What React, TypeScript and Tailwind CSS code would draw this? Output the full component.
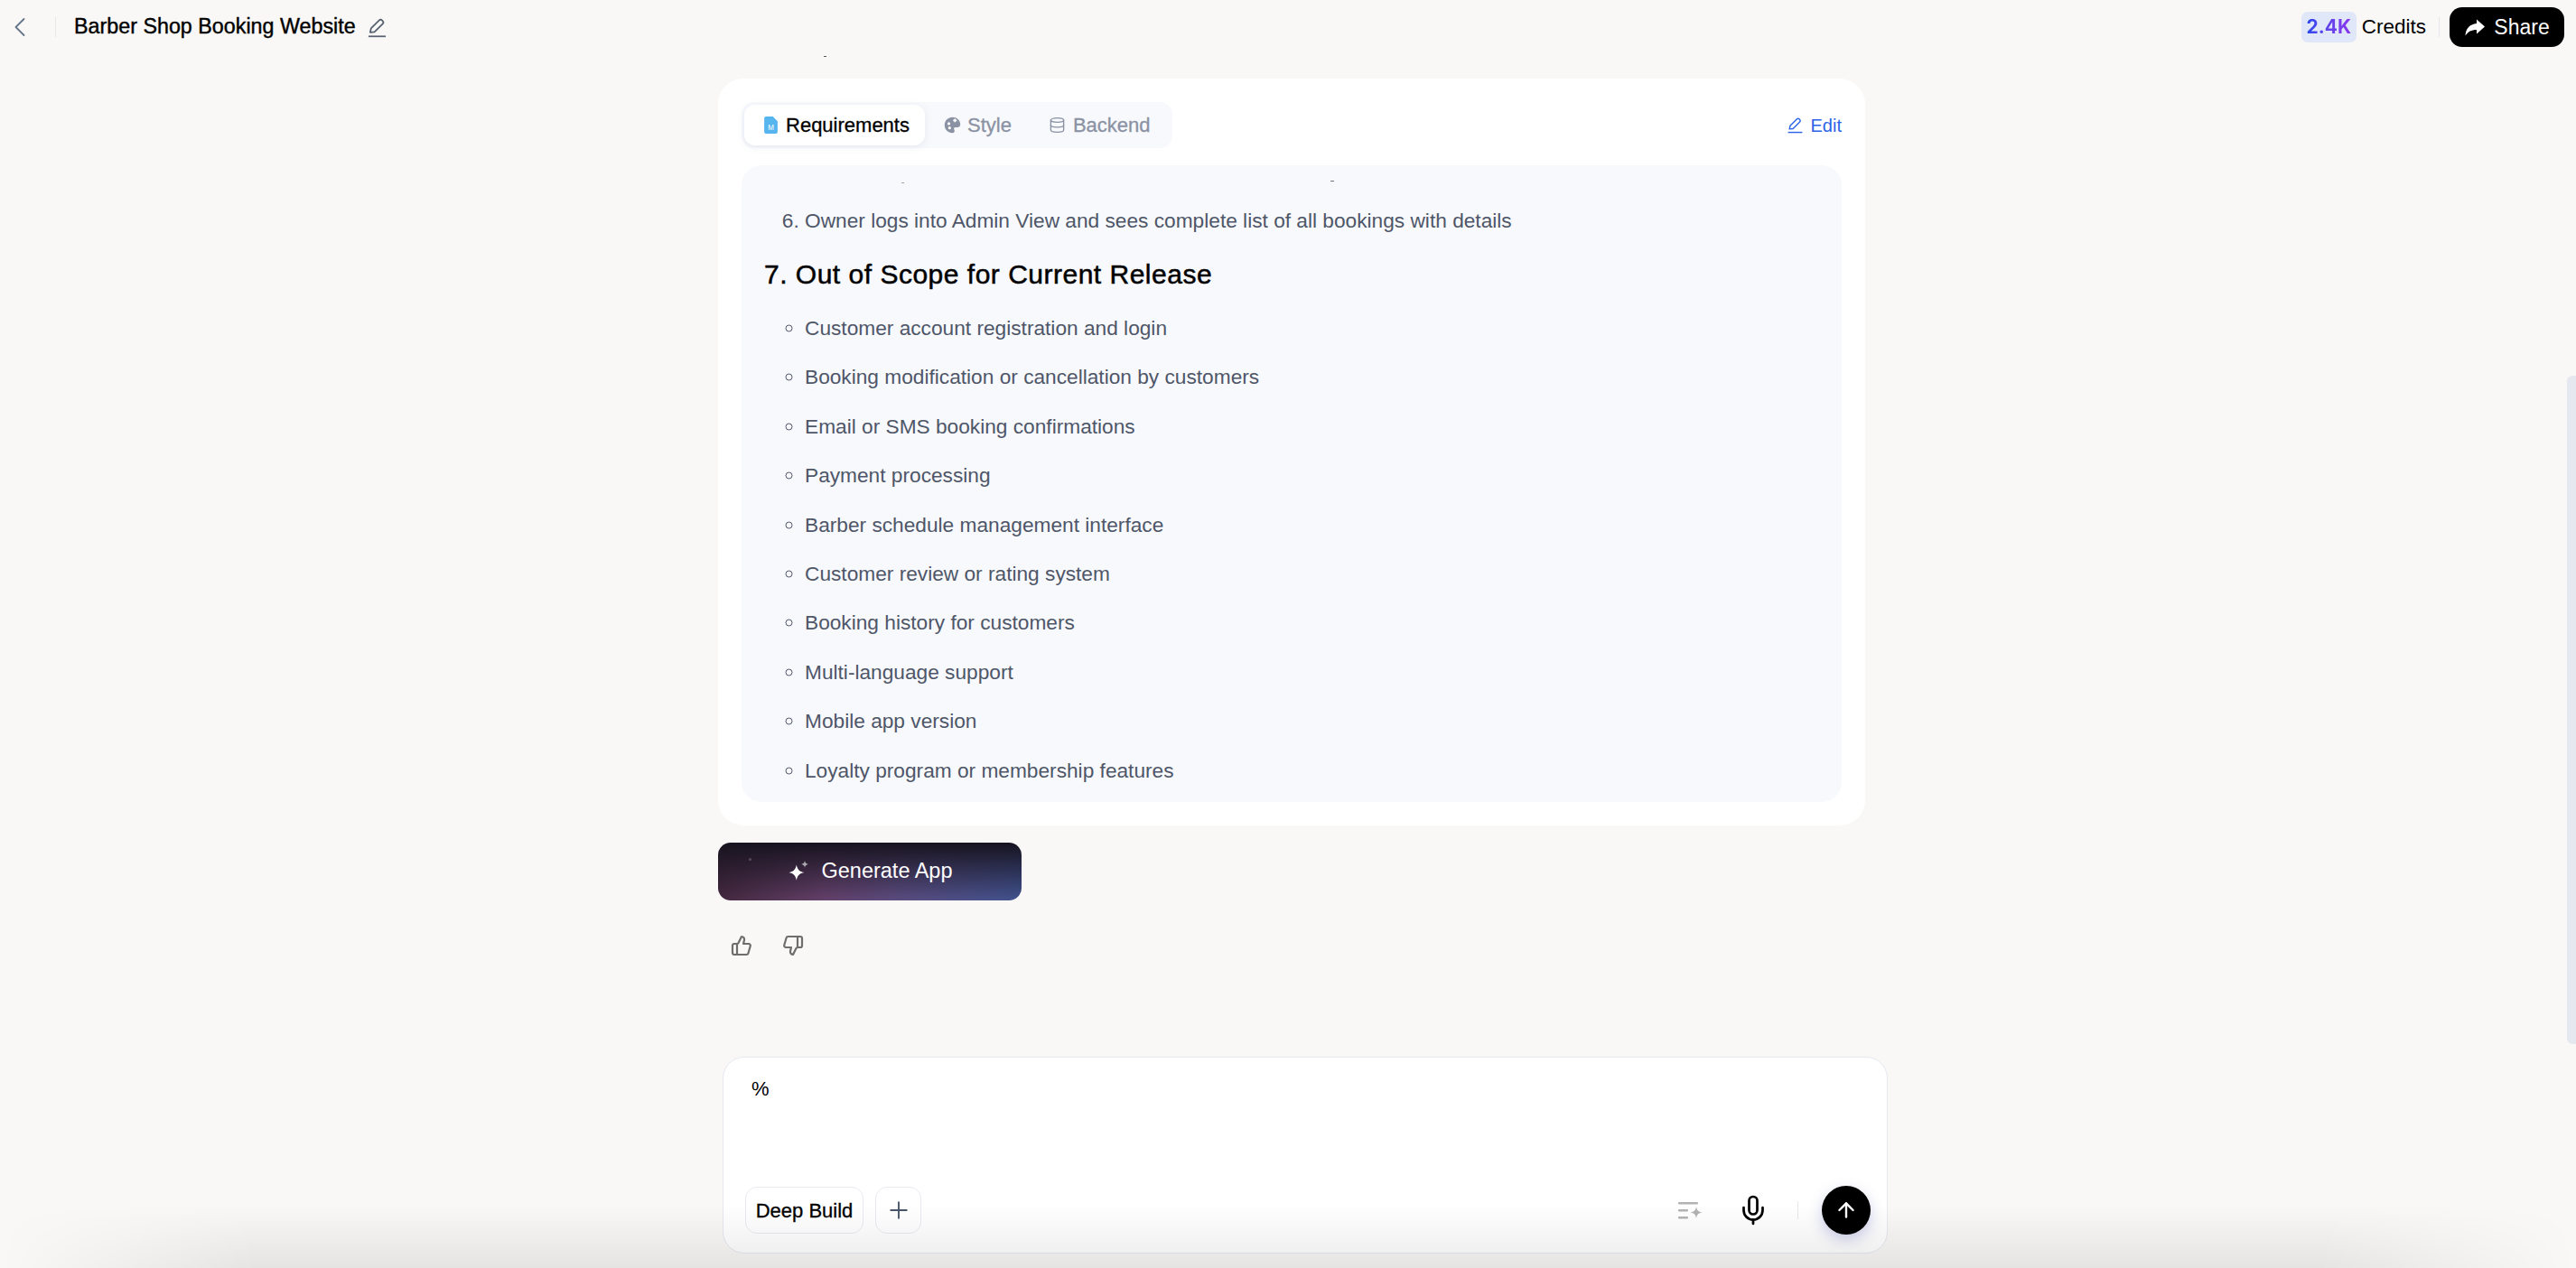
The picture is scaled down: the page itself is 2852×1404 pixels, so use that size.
import { ChevronLeft, ThumbsUp, ThumbsDown, Mic, ArrowUp, Plus, Database } from "lucide-react";

const items = [
  "Customer account registration and login",
  "Booking modification or cancellation by customers",
  "Email or SMS booking confirmations",
  "Payment processing",
  "Barber schedule management interface",
  "Customer review or rating system",
  "Booking history for customers",
  "Multi-language support",
  "Mobile app version",
  "Loyalty program or membership features",
];

function Pen({ className }: { className: string }) {
  return (
    <svg viewBox="0 0 24 24" fill="none" stroke="currentColor" strokeWidth="1.8" strokeLinecap="round" strokeLinejoin="round" className={className}>
      <path d="M4 17.500 5 13 14.500 3.600a2.200 2.200 0 0 1 3.100 0l.9.9a2.200 2.200 0 0 1 0 3.100L9 17z" />
      <path d="M2 22.200h20" strokeLinecap="butt" />
    </svg>
  );
}

export default function App() {
  return (
    <div className="relative h-[1404px] w-[2852px] overflow-hidden bg-[#f9f8f6] font-['Liberation_Sans',sans-serif] text-black">
      <header className="flex h-[60px] items-center justify-between pr-[13px]">
        <div className="flex items-center">
          <ChevronLeft className="ml-[4px] h-[36px] w-[36px] text-[#64748b]" strokeWidth={1.2} />
          <div className="ml-[21px] h-[22px] w-px bg-[#e5e7eb]" />
          <h1 className="ml-[20px] text-[23.3px] font-medium leading-none [-webkit-text-stroke:0.4px_black]">Barber Shop Booking Website</h1>
          <Pen className="ml-[12px] h-[23px] w-[23px] text-[#56606f]" />
        </div>
        <div className="flex items-center">
          <span className="flex h-[34px] w-[61px] items-center justify-center rounded-[7px] bg-[#e0e7f8] font-['Inter',sans-serif] text-[21px] font-bold">
            <span className="bg-gradient-to-r from-[#2548ee] to-[#8b35ec] bg-clip-text text-transparent">2.4K</span>
          </span>
          <span className="ml-[6px] text-[22.5px]">Credits</span>
          <div className="ml-[14px] h-[22px] w-px bg-[#e5e7eb]" />
          <button className="ml-[11px] flex h-[44px] w-[127px] items-center justify-center gap-[9px] rounded-[14px] bg-black text-[23px] font-medium text-white">
            <svg viewBox="0 0 24 24" fill="white" className="h-[24px] w-[24px]">
              <path d="M14 3.500 23 11.500 14 19.500v-4.600c-6 0-9.500 2-12.500 6.600.4-7.500 4.600-12.600 12.500-13.400z" />
            </svg>
            Share
          </button>
        </div>
      </header>

      <main className="ml-[795px] w-[1270px] pt-[27px]">
        <section className="rounded-[28px] bg-white px-[26px] pb-[26px] pt-[26px]">
          <div className="mb-[19px] flex items-center justify-between">
            <div className="flex h-[51px] items-center rounded-[14px] bg-[#f8f9fd] p-[3px] text-[22px] text-[#8a92a3] [-webkit-text-stroke:0.3px_#8a92a3]">
              <div className="flex h-[45px] w-[200px] items-center justify-center gap-[9px] rounded-[12px] bg-white pl-[5px] text-black shadow-[0_2px_8px_rgba(100,116,139,0.12)] [-webkit-text-stroke:0.3px_black]">
                <svg viewBox="0 0 14 18" className="h-[19px] w-[15px]">
                  <path d="M2 0h7l5 5v11a2 2 0 0 1-2 2H2a2 2 0 0 1-2-2V2a2 2 0 0 1 2-2z" fill="#56b4ee" />
                  <text x="7" y="14" fontSize="7" textAnchor="middle" fill="white" fontFamily="Inter">M</text>
                </svg>
                Requirements
              </div>
              <div className="ml-[21px] flex items-center gap-[7px]">
                <svg viewBox="0 0 24 24" className="h-[19px] w-[19px]" fill="#8a92a3" stroke="none">
                  <path d="M12 1C5.900 1 1 5.900 1 12s4.900 11 11 11c2 0 3-1.300 3-2.800 0-1.600-1-2-1-3.200 0-1.200 1-2 2.300-2H19c2.400 0 4-1.800 4-4C23 5.200 18 1 12 1z" />
                  <circle cx="7" cy="10" r="2" fill="#fff" />
                  <circle cx="8" cy="16" r="2" fill="#fff" />
                  <path d="M13 5.500h5M15.500 3v5" stroke="#fff" strokeWidth="2" />
                </svg>
                Style
              </div>
              <div className="ml-[41px] flex items-center gap-[8px] pr-[21px]">
                <Database className="h-[19px] w-[19px]" strokeWidth={1.7} />
                Backend
              </div>
            </div>
            <div className="flex items-center gap-[8px] text-[20px] text-[#2b63e8]">
              <Pen className="h-[19px] w-[19px]" />
              Edit
            </div>
          </div>

          <div className="relative rounded-[22px] bg-[#f8f9fd] px-[25px] pb-[17px] pt-[43px] text-[22.7px] leading-[36px] text-[#4e5668]">
            <span className="absolute left-[177px] top-[19px] h-px w-[3px] bg-[#9ca3af]" />
            <span className="absolute left-[652px] top-[17px] h-px w-[4px] bg-[#6b7280]" />
            <ol start={6} className="list-decimal pl-[45px]">
              <li>Owner logs into Admin View and sees complete list of all bookings with details</li>
            </ol>
            <h2 className="mb-[21px] mt-[22px] text-[30px] font-medium leading-[40px] tracking-[0.5px] text-black [-webkit-text-stroke:0.5px_black]">7. Out of Scope for Current Release</h2>
            <ul className="flex list-[circle] flex-col gap-[18.4px] pl-[45px]">
              {items.map((t) => (
                <li key={t}>{t}</li>
              ))}
            </ul>
          </div>
        </section>

        <button className="relative mt-[19px] flex h-[64px] w-[336px] items-center justify-center gap-[12px] overflow-hidden rounded-[14px] bg-[linear-gradient(to_top,rgba(20,18,30,0)_0%,#17131f_100%),linear-gradient(90deg,#44283f_0%,#64406a_35%,#5a4c80_60%,#40528f_100%)] text-[23.5px] font-medium text-white">
          <span className="absolute left-[34px] top-[17px] h-[3px] w-[3px] rounded-full bg-[#5a4a58]" />
          <svg viewBox="0 0 24 24" className="h-[26px] w-[26px]" fill="white">
            <path d="M10 5c1 5 3 7 8 8-5 1-7 3-8 8-1-5-3-7-8-8 5-1 7-3 8-8z" />
            <path d="M18.500 1c.4 2.200 1.300 3.100 3.500 3.500-2.200.4-3.100 1.300-3.500 3.500-.4-2.200-1.300-3.100-3.500-3.500 2.200-.4 3.100-1.300 3.500-3.500z" opacity="0.6" />
          </svg>
          Generate App
        </button>

        <div className="ml-[14px] mt-[38px] flex gap-[33px] text-[#6e6e6c]">
          <ThumbsUp className="h-[24px] w-[24px]" strokeWidth={2.2} />
          <ThumbsDown className="h-[24px] w-[24px]" strokeWidth={2.2} />
        </div>
      </main>

      <div className="absolute bottom-[16px] left-[800px] flex h-[218px] w-[1290px] flex-col justify-between rounded-[24px] border border-[#e6e9f2] bg-white pb-[20px] pl-[24px] pr-[18px] pt-[21px]">
        <p className="pl-[7px] text-[22px] leading-[28px] text-black">%</p>
        <div className="flex items-center">
          <div className="flex h-[52px] w-[131px] items-center justify-center rounded-[13px] border border-[#e9ebf1] text-[22px] [-webkit-text-stroke:0.3px_black]">Deep Build</div>
          <div className="ml-[13px] flex h-[52px] w-[51px] items-center justify-center rounded-[13px] border border-[#e9ebf1] text-[#475569]">
            <Plus className="h-[30px] w-[30px]" strokeWidth={1.5} />
          </div>
          <svg viewBox="0 0 28 24" className="ml-auto h-[24px] w-[28px]" fill="#b3b3b3">
            <rect x="0" y="3" width="22" height="2.400" rx="1" />
            <rect x="0" y="11" width="11" height="2.400" rx="1" />
            <rect x="0" y="19" width="11" height="2.400" rx="1" />
            <path d="M20 8c.8 4.400 2 5.600 7 6.500-5 .9-6.200 2.100-7 6.500-.8-4.400-2-5.600-7-6.500 5-.9 6.200-2.100 7-6.500z" />
          </svg>
          <Mic className="ml-[37px] h-[36px] w-[36px] text-black" strokeWidth={1.8} />
          <div className="ml-[31px] h-[20px] w-px bg-[#e5e7eb]" />
          <button className="ml-[26px] flex h-[54px] w-[54px] items-center justify-center rounded-full bg-black text-white shadow-[0_6px_16px_rgba(90,100,190,0.3)]">
            <ArrowUp className="h-[26px] w-[26px]" strokeWidth={2.2} />
          </button>
        </div>
      </div>

      <span className="absolute left-[912px] top-[62px] h-px w-[3px] bg-[#555]" />
      <div className="absolute bottom-0 left-0 h-[70px] w-full bg-gradient-to-t from-[rgba(0,0,0,0.08)] to-transparent [mask-image:linear-gradient(90deg,transparent,black_10%,black_90%,transparent)]" />
      <div className="absolute right-0 top-[416px] h-[740px] w-[10px] rounded-l-[6px] bg-[#e5e8ee]" />
    </div>
  );
}
